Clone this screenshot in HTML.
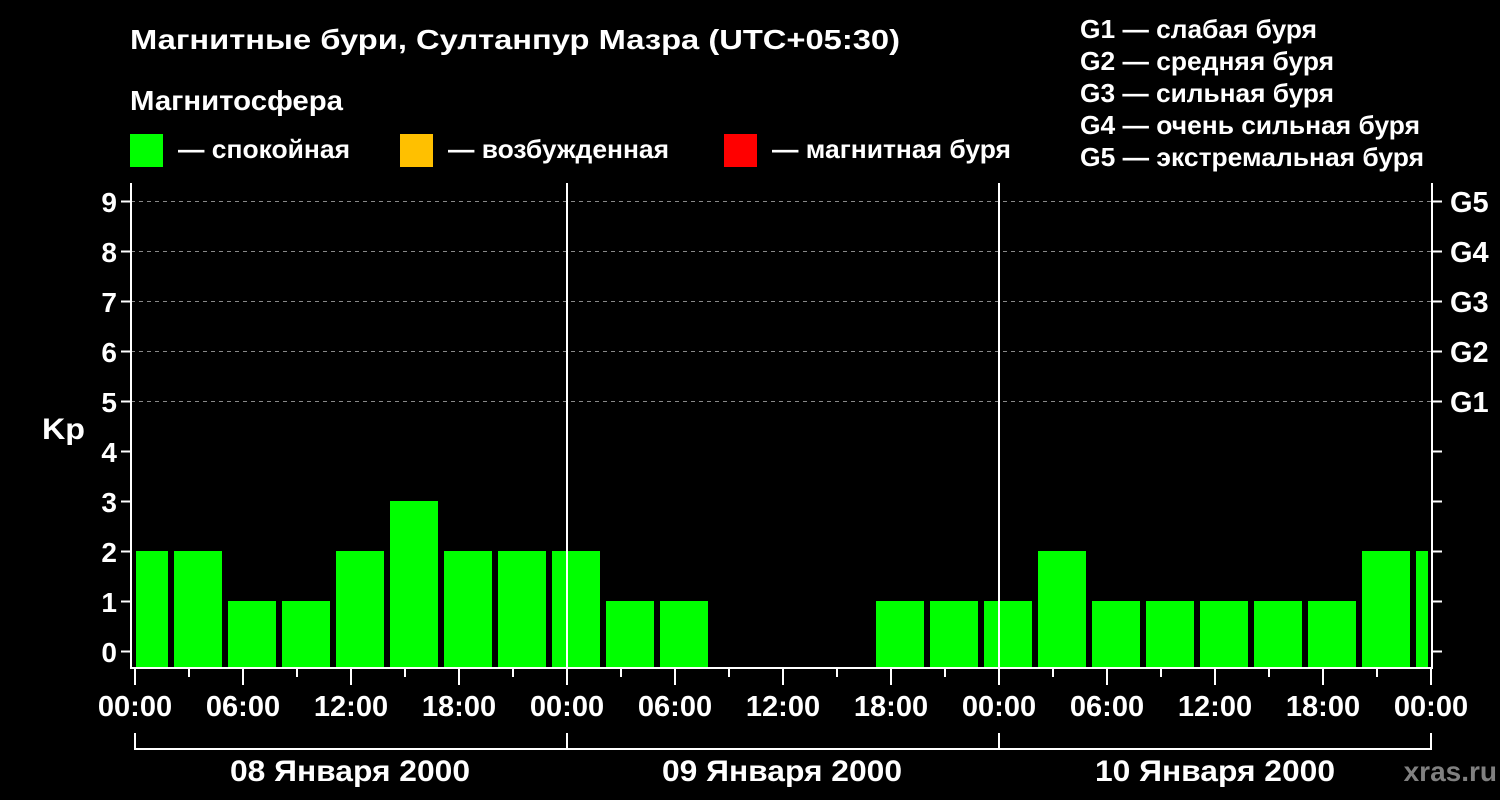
<!DOCTYPE html>
<html><head><meta charset="utf-8"><style>
html,body{margin:0;padding:0;background:#000;}
svg{display:block;font-family:"Liberation Sans",sans-serif;font-weight:bold;}
</style></head><body>
<svg width="1500" height="800" viewBox="0 0 1500 800" xmlns="http://www.w3.org/2000/svg">
<rect width="1500" height="800" fill="#000"/>
<g fill="#fff" font-size="28" lengthAdjust="spacingAndGlyphs">
<text x="130" y="49" textLength="770" lengthAdjust="spacingAndGlyphs">Магнитные бури, Султанпур Мазра (UTC+05:30)</text>
<text x="130" y="110" textLength="213" lengthAdjust="spacingAndGlyphs">Магнитосфера</text>
<text x="178" y="158" font-size="26" textLength="172" lengthAdjust="spacingAndGlyphs">— спокойная</text>
<text x="448" y="158" font-size="26" textLength="221" lengthAdjust="spacingAndGlyphs">— возбужденная</text>
<text x="772" y="158" font-size="26" textLength="239" lengthAdjust="spacingAndGlyphs">— магнитная буря</text>
</g>
<rect x="130" y="134" width="33" height="33" fill="#00ff00"/>
<rect x="400" y="134" width="33" height="33" fill="#ffc000"/>
<rect x="724" y="134" width="33" height="33" fill="#ff0000"/>
<g fill="#fff" font-size="26">
<text x="1080" y="38" textLength="237" lengthAdjust="spacingAndGlyphs">G1 — слабая буря</text>
<text x="1080" y="70" textLength="254" lengthAdjust="spacingAndGlyphs">G2 — средняя буря</text>
<text x="1080" y="102" textLength="254" lengthAdjust="spacingAndGlyphs">G3 — сильная буря</text>
<text x="1080" y="134" textLength="340" lengthAdjust="spacingAndGlyphs">G4 — очень сильная буря</text>
<text x="1080" y="166" textLength="344" lengthAdjust="spacingAndGlyphs">G5 — экстремальная буря</text>
</g>
<g stroke="#888" stroke-dasharray="4,4" stroke-width="1">
<line x1="131" x2="1432" y1="201.5" y2="201.5"/>
<line x1="131" x2="1432" y1="251.5" y2="251.5"/>
<line x1="131" x2="1432" y1="301.5" y2="301.5"/>
<line x1="131" x2="1432" y1="351.5" y2="351.5"/>
<line x1="131" x2="1432" y1="401.5" y2="401.5"/>
</g>
<g fill="#00ff00">
<rect x="136" y="551" width="32" height="117"/>
<rect x="174" y="551" width="48" height="117"/>
<rect x="228" y="601" width="48" height="67"/>
<rect x="282" y="601" width="48" height="67"/>
<rect x="336" y="551" width="48" height="117"/>
<rect x="390" y="501" width="48" height="167"/>
<rect x="444" y="551" width="48" height="117"/>
<rect x="498" y="551" width="48" height="117"/>
<rect x="552" y="551" width="48" height="117"/>
<rect x="606" y="601" width="48" height="67"/>
<rect x="660" y="601" width="48" height="67"/>
<rect x="876" y="601" width="48" height="67"/>
<rect x="930" y="601" width="48" height="67"/>
<rect x="984" y="601" width="48" height="67"/>
<rect x="1038" y="551" width="48" height="117"/>
<rect x="1092" y="601" width="48" height="67"/>
<rect x="1146" y="601" width="48" height="67"/>
<rect x="1200" y="601" width="48" height="67"/>
<rect x="1254" y="601" width="48" height="67"/>
<rect x="1308" y="601" width="48" height="67"/>
<rect x="1362" y="551" width="48" height="117"/>
<rect x="1416" y="551" width="12" height="117"/>
</g>
<g stroke="#fff" stroke-width="2" fill="none">
<path d="M131 183V668H1432V183"/>
<line x1="567" y1="183" x2="567" y2="668"/>
<line x1="999" y1="183" x2="999" y2="668"/>
<path d="M121 201.5h10M121 251.5h10M121 301.5h10M121 351.5h10M121 401.5h10M121 451.5h10M121 501.5h10M121 551.5h10M121 601.5h10M121 651.5h10"/>
<path d="M1432 201.5h10M1432 251.5h10M1432 301.5h10M1432 351.5h10M1432 401.5h10M1432 451.5h10M1432 501.5h10M1432 551.5h10M1432 601.5h10M1432 651.5h10"/>
<path d="M135 668v17M243 668v17M351 668v17M459 668v17M567 668v17M675 668v17M783 668v17M891 668v17M999 668v17M1107 668v17M1215 668v17M1323 668v17M1431 668v17"/>
<path d="M189 668v9M297 668v9M405 668v9M513 668v9M621 668v9M729 668v9M837 668v9M945 668v9M1053 668v9M1161 668v9M1269 668v9M1377 668v9"/>
<path d="M135 733V749H1431V733M567 733v16M999 733v16"/>
</g>
<g fill="#fff" font-size="28" text-anchor="end">
<text x="117" y="212">9</text><text x="117" y="262">8</text><text x="117" y="312">7</text>
<text x="117" y="362">6</text><text x="117" y="412">5</text><text x="117" y="462">4</text>
<text x="117" y="512">3</text><text x="117" y="562">2</text><text x="117" y="612">1</text>
<text x="117" y="662">0</text>
</g>
<text x="42" y="439" fill="#fff" font-size="30" textLength="43" lengthAdjust="spacingAndGlyphs">Kp</text>
<g fill="#fff" font-size="29">
<text x="1450" y="212">G5</text><text x="1450" y="262">G4</text><text x="1450" y="312">G3</text>
<text x="1450" y="362">G2</text><text x="1450" y="412">G1</text>
</g>
<g fill="#fff" font-size="29" text-anchor="middle">
<text x="135" y="716">00:00</text><text x="243" y="716">06:00</text><text x="351" y="716">12:00</text>
<text x="459" y="716">18:00</text><text x="567" y="716">00:00</text><text x="675" y="716">06:00</text>
<text x="783" y="716">12:00</text><text x="891" y="716">18:00</text><text x="999" y="716">00:00</text>
<text x="1107" y="716">06:00</text><text x="1215" y="716">12:00</text><text x="1323" y="716">18:00</text>
<text x="1431" y="716">00:00</text>
</g>
<g fill="#fff" font-size="30" text-anchor="middle">
<text x="350" y="781" textLength="240" lengthAdjust="spacingAndGlyphs">08 Января 2000</text>
<text x="782" y="781" textLength="240" lengthAdjust="spacingAndGlyphs">09 Января 2000</text>
<text x="1215" y="781" textLength="240" lengthAdjust="spacingAndGlyphs">10 Января 2000</text>
</g>
<text x="1497" y="781" fill="#808080" font-size="28" text-anchor="end">xras.ru</text>
</svg>
</body></html>
